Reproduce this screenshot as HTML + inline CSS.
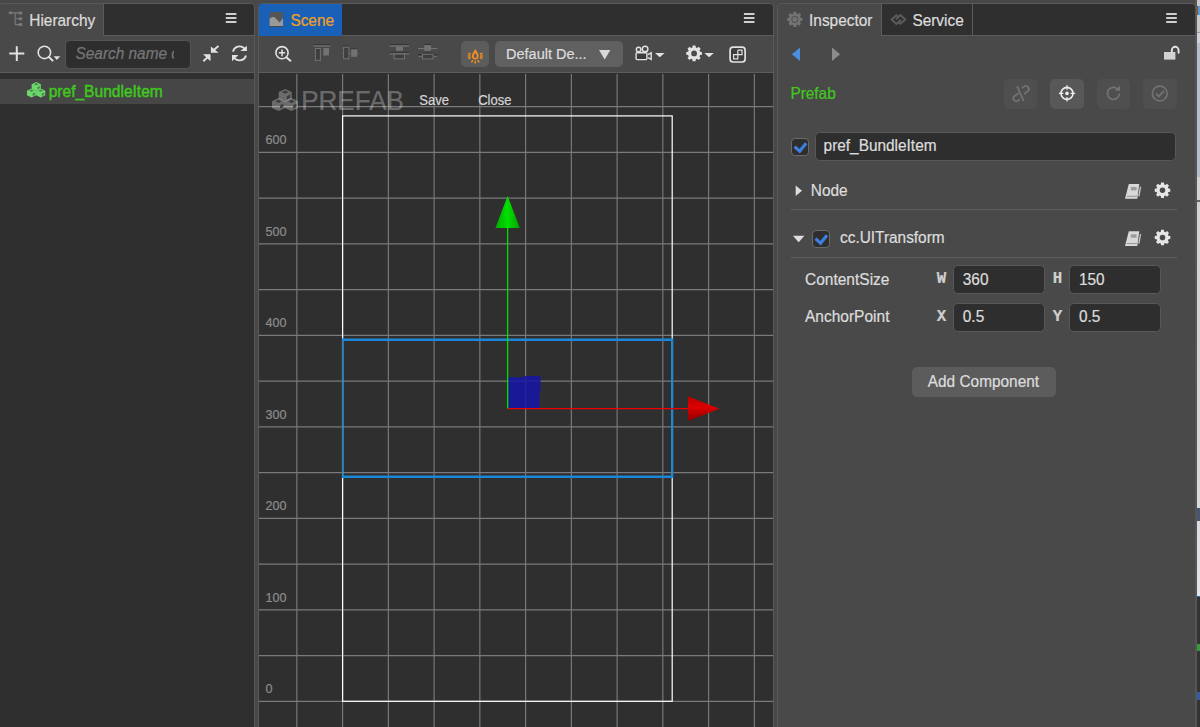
<!DOCTYPE html>
<html><head><meta charset="utf-8"><title>Cocos Creator</title>
<style>
html,body{margin:0;padding:0;}
body{width:1200px;height:727px;overflow:hidden;background:#484848;position:relative;font-family:'Liberation Sans', sans-serif;}
.a{position:absolute;}
.t{position:absolute;white-space:nowrap;line-height:1;-webkit-text-stroke:0.22px currentColor;transform:scaleY(1.06);transform-origin:0 84.65%;}
svg{position:absolute;overflow:visible;}
.inp{position:absolute;box-sizing:border-box;background:#2e2e2e;border:1px solid #585858;border-radius:4.5px;}
.cb{position:absolute;box-sizing:border-box;background:#2e2e2e;border:1.2px solid #6a6a6a;border-radius:4px;}
.btn{position:absolute;border-radius:5px;}
</style></head><body>
<div class="a" style="left:-3px;top:2.5px;width:255.5px;height:730px;background:#2f2f2f;border:1.3px solid #585858;border-radius:4px;"></div>
<div class="a" style="left:0px;top:3.8px;width:103px;height:32px;background:#494949;"></div>
<div class="a" style="left:103px;top:3.8px;width:1px;height:31.5px;background:#5c5c5c;"></div>
<div class="a" style="left:103px;top:35px;width:151px;height:1px;background:#5c5c5c;"></div>
<div class="a" style="left:0px;top:36px;width:254px;height:36.5px;background:#494949;"></div>
<div class="a" style="left:0px;top:72.3px;width:254px;height:1.2px;background:#5c5c5c;"></div>
<div class="a" style="left:0px;top:78.8px;width:254px;height:25.6px;background:#464646;"></div>
<div class="inp" style="left:65.3px;top:39.5px;width:125.6px;height:29px;overflow:hidden;border-color:#555;"></div>
<div class="t" style="left:75.50px;top:45.66px;font-size:15.4px;color:#767676;font-family:'Liberation Sans', sans-serif;font-style:italic;width:98px;overflow:hidden;">Search name or uuid</div>
<div class="t" style="left:29.30px;top:12.61px;font-size:15.4px;color:#dcdcdc;font-family:'Liberation Sans', sans-serif;">Hierarchy</div>
<div class="t" style="left:48.70px;top:83.54px;font-size:15.55px;color:#40c81c;font-family:'Liberation Sans', sans-serif;-webkit-text-stroke:0.45px currentColor;">pref_BundleItem</div>
<div class="a" style="left:257.9px;top:2.5px;width:513.7px;height:730px;background:#2f2f2f;border:1.3px solid #585858;border-radius:4px;"></div>
<div class="a" style="left:259.2px;top:3.8px;width:82.8px;height:31.9px;background:#1960b9;border-top-left-radius:3px;"></div>
<div class="a" style="left:342px;top:35px;width:431px;height:1px;background:#5c5c5c;"></div>
<div class="a" style="left:259px;top:35.6px;width:514px;height:37px;background:#494949;"></div>
<div class="a" style="left:259px;top:72.3px;width:514px;height:1.2px;background:#5c5c5c;"></div>
<div class="t" style="left:290.40px;top:12.66px;font-size:15.4px;color:#f0a020;font-family:'Liberation Sans', sans-serif;">Scene</div>
<div class="btn" style="left:460.6px;top:41.2px;width:28.2px;height:25.6px;background:#5c5c5c;"></div>
<div class="btn" style="left:494.6px;top:41.2px;width:128px;height:25.6px;background:#606060;"></div>
<div class="t" style="left:506.00px;top:47.03px;font-size:14.5px;color:#dcdcdc;font-family:'Liberation Sans', sans-serif;">Default De...</div>
<svg style="left:599.4px;top:50px" width="11.4" height="9.6" viewBox="0 0 11.4 9.6"><path d="M0 0H11.4L5.7 9.6Z" fill="#d8d8d8"/></svg>
<svg class="a" style="left:259px;top:73.5px;" width="514" height="653.5" viewBox="259 73.5 514 653.5">
<defs><linearGradient id="gg" x1="0" x2="1" y1="0" y2="0"><stop offset="0" stop-color="#00a800"/><stop offset="0.5" stop-color="#00e000"/><stop offset="1" stop-color="#00a000"/></linearGradient><linearGradient id="rg" x1="0" x2="0" y1="0" y2="1"><stop offset="0" stop-color="#b80000"/><stop offset="0.45" stop-color="#dc0000"/><stop offset="1" stop-color="#8a0000"/></linearGradient></defs>
<path d="M296.85 73.5V727M342.60 73.5V727M388.35 73.5V727M434.10 73.5V727M479.85 73.5V727M525.60 73.5V727M571.35 73.5V727M617.10 73.5V727M662.85 73.5V727M708.60 73.5V727M754.35 73.5V727M259 746.55H773M259 700.80H773M259 655.05H773M259 609.30H773M259 563.55H773M259 517.80H773M259 472.05H773M259 426.30H773M259 380.55H773M259 334.80H773M259 289.05H773M259 243.30H773M259 197.55H773M259 151.80H773M259 106.05H773" stroke="#ffffff" stroke-opacity="0.36" stroke-width="1.15" fill="none"/>
<rect x="342.6" y="115.4" width="329.6" height="585.4" fill="none" stroke="#ffffff" stroke-width="1.2"/>
<path d="M342.6 339.2H672.2M342.6 476.3H672.2" stroke="#1b87d6" stroke-width="2.4" fill="none"/>
<path d="M342.6 338.0V477.5" stroke="#1b87d6" stroke-width="1.5" fill="none"/>
<path d="M672.2 338.0V477.5" stroke="#1b87d6" stroke-width="2.2" fill="none"/>
<path d="M508.20000000000005 376.8H524.4V375.59999999999997H540.6V391.2H539.6V408.2H508.20000000000005Z" fill="#1616a6" fill-opacity="0.86"/>
<path d="M507.6 408.2V226" stroke="#00e000" stroke-width="1.3"/>
<path d="M507.6 195.4L519.8000000000001 227.4L495.40000000000003 227.4Z" fill="url(#gg)"/>
<path d="M507.6 408.2H689" stroke="#ee0000" stroke-width="1.25"/>
<path d="M719.4 408.2L688 395.8L688 420.59999999999997Z" fill="url(#rg)"/>
</svg>
<div class="t" style="left:301.20px;top:87.55px;font-size:26.05px;color:rgba(255,255,255,0.29);font-family:'Liberation Sans', sans-serif;">PREFAB</div>
<div class="t" style="left:419.30px;top:94.30px;font-size:13px;color:#d4d4d4;font-family:'Liberation Sans', sans-serif;">Save</div>
<div class="t" style="left:478.20px;top:94.30px;font-size:13px;color:#d4d4d4;font-family:'Liberation Sans', sans-serif;">Close</div>
<div class="t" style="left:265.40px;top:683.23px;font-size:12.6px;color:#8c8c8c;font-family:'Liberation Sans', sans-serif;">0</div>
<div class="t" style="left:265.40px;top:591.73px;font-size:12.6px;color:#8c8c8c;font-family:'Liberation Sans', sans-serif;">100</div>
<div class="t" style="left:265.40px;top:500.23px;font-size:12.6px;color:#8c8c8c;font-family:'Liberation Sans', sans-serif;">200</div>
<div class="t" style="left:265.40px;top:408.73px;font-size:12.6px;color:#8c8c8c;font-family:'Liberation Sans', sans-serif;">300</div>
<div class="t" style="left:265.40px;top:317.23px;font-size:12.6px;color:#8c8c8c;font-family:'Liberation Sans', sans-serif;">400</div>
<div class="t" style="left:265.40px;top:225.73px;font-size:12.6px;color:#8c8c8c;font-family:'Liberation Sans', sans-serif;">500</div>
<div class="t" style="left:265.40px;top:134.23px;font-size:12.6px;color:#8c8c8c;font-family:'Liberation Sans', sans-serif;">600</div>
<div class="a" style="left:776.7px;top:2.5px;width:417px;height:730px;background:#494949;border:1.3px solid #585858;border-radius:4px;"></div>
<div class="a" style="left:880.6px;top:4.2px;width:314.4px;height:31.2px;background:#2f2f2f;border-top-right-radius:4px;"></div>
<div class="a" style="left:880.6px;top:4.2px;width:1px;height:31.2px;background:#5c5c5c;"></div>
<div class="a" style="left:972.4px;top:4.2px;width:1px;height:31.2px;background:#5c5c5c;"></div>
<div class="a" style="left:880.6px;top:35px;width:314.4px;height:1px;background:#5c5c5c;"></div>
<div class="t" style="left:809.10px;top:12.66px;font-size:15.4px;color:#dcdcdc;font-family:'Liberation Sans', sans-serif;">Inspector</div>
<div class="t" style="left:912.40px;top:12.66px;font-size:15.4px;color:#dcdcdc;font-family:'Liberation Sans', sans-serif;">Service</div>
<div class="t" style="left:790.40px;top:85.96px;font-size:15.4px;color:#40c81c;font-family:'Liberation Sans', sans-serif;">Prefab</div>
<div class="btn" style="left:1003.8px;top:79px;width:33.4px;height:30.4px;background:#4f4f4f;"></div>
<div class="btn" style="left:1050.4px;top:79px;width:33.4px;height:30.4px;background:#585858;"></div>
<div class="btn" style="left:1097px;top:79px;width:33.4px;height:30.4px;background:#4f4f4f;"></div>
<div class="btn" style="left:1143.2px;top:79px;width:33.4px;height:30.4px;background:#4f4f4f;"></div>
<div class="cb" style="left:791.2px;top:138px;width:17.7px;height:17.7px;"></div>
<div class="inp" style="left:814.6px;top:132.3px;width:361px;height:29.2px;"></div>
<div class="t" style="left:823.60px;top:138.46px;font-size:15.4px;color:#dcdcdc;font-family:'Liberation Sans', sans-serif;">pref_BundleItem</div>
<div class="t" style="left:810.80px;top:182.96px;font-size:15.4px;color:#dcdcdc;font-family:'Liberation Sans', sans-serif;">Node</div>
<div class="a" style="left:791px;top:209.3px;width:385.5px;height:1px;background:#5e5e5e;"></div>
<div class="cb" style="left:812.2px;top:230px;width:17.4px;height:17.6px;"></div>
<div class="t" style="left:840.00px;top:229.96px;font-size:15.4px;color:#dcdcdc;font-family:'Liberation Sans', sans-serif;">cc.UITransform</div>
<div class="a" style="left:791px;top:257.1px;width:385.5px;height:1px;background:#5e5e5e;"></div>
<div class="t" style="left:805.00px;top:271.63px;font-size:15.5px;color:#dcdcdc;font-family:'Liberation Sans', sans-serif;">ContentSize</div>
<div class="t" style="left:805.00px;top:309.18px;font-size:15.5px;color:#dcdcdc;font-family:'Liberation Sans', sans-serif;">AnchorPoint</div>
<div class="inp" style="left:953px;top:265.2px;width:92.2px;height:29px;"></div>
<div class="inp" style="left:1069.3px;top:265.2px;width:92px;height:29px;"></div>
<div class="t" style="left:936.70px;top:272.33px;font-size:15.8px;color:#cfcfcf;font-family:'Liberation Mono', monospace;font-weight:bold;">W</div>
<div class="t" style="left:1052.70px;top:272.33px;font-size:15.8px;color:#cfcfcf;font-family:'Liberation Mono', monospace;font-weight:bold;">H</div>
<div class="t" style="left:962.80px;top:271.76px;font-size:15.4px;color:#dcdcdc;font-family:'Liberation Sans', sans-serif;">360</div>
<div class="t" style="left:1079.00px;top:271.76px;font-size:15.4px;color:#dcdcdc;font-family:'Liberation Sans', sans-serif;">150</div>
<div class="inp" style="left:953px;top:302.6px;width:92.2px;height:29px;"></div>
<div class="inp" style="left:1069.3px;top:302.6px;width:92px;height:29px;"></div>
<div class="t" style="left:936.70px;top:309.73px;font-size:15.8px;color:#cfcfcf;font-family:'Liberation Mono', monospace;font-weight:bold;">X</div>
<div class="t" style="left:1052.70px;top:309.73px;font-size:15.8px;color:#cfcfcf;font-family:'Liberation Mono', monospace;font-weight:bold;">Y</div>
<div class="t" style="left:962.80px;top:309.16px;font-size:15.4px;color:#dcdcdc;font-family:'Liberation Sans', sans-serif;">0.5</div>
<div class="t" style="left:1079.00px;top:309.16px;font-size:15.4px;color:#dcdcdc;font-family:'Liberation Sans', sans-serif;">0.5</div>
<div class="btn" style="left:912.3px;top:366.7px;width:143.4px;height:30.6px;background:#5c5c5c;"></div>
<div class="t" style="left:927.80px;top:373.96px;font-size:15.4px;color:#dcdcdc;font-family:'Liberation Sans', sans-serif;">Add Component</div>
<div class="a" style="left:1195px;top:0px;width:2px;height:727px;background:#555;"></div>
<div class="a" style="left:1196.6px;top:0;width:3.4px;height:727px;background:linear-gradient(to bottom,#c8c8c8 0,#c8c8c8 32px,#9a9a9a 32px,#9a9a9a 33px,#cfd2d8 33px,#cfd2d8 43px,#b6becd 43px,#b6becd 177px,#d4d4d4 177px,#d4d4d4 200.5px,#666 200.5px,#666 202px,#d2d2d2 202px,#d6d8dc 480px,#e2e4ea 596px,#2a6fd0 596px,#2a6fd0 597.5px,#333 597.5px,#333 727px);"></div>
<div class="a" style="left:1196.2px;top:6px;width:2.6px;height:8.5px;background:#7a5a3a;"></div>
<div class="a" style="left:1198px;top:6px;width:2px;height:8.5px;background:#5a9ad8;"></div>
<div class="a" style="left:1196.6px;top:508px;width:3.4px;height:13px;background:#4a5670;"></div>
<div class="a" style="left:1196.6px;top:644px;width:3.4px;height:7px;background:#3a9a3a;"></div>
<div class="a" style="left:1196.6px;top:692px;width:3.4px;height:8px;background:#3a5aa8;"></div>
<svg class="a" style="left:0;top:0;" width="1200" height="727" viewBox="0 0 1200 727"><g fill="#7a7a7a" stroke="none"><rect x="8.8" y="11.6" width="3.2" height="2.6"/><rect x="18.8" y="11.6" width="3.4" height="2.8"/><rect x="18.8" y="17.4" width="3.4" height="2.8"/><rect x="18.8" y="23.2" width="3.4" height="2.8"/></g><path d="M11 12.9H19M15.2 12.9V24.6M15.2 18.8H19M15.2 24.6H19" stroke="#7a7a7a" stroke-width="1.1" fill="none"/><path d="M225.8 14H236.4M225.8 18H236.4M225.8 22H236.4" stroke="#cecece" stroke-width="2"/><path d="M743.9 14H754.5M743.9 18H754.5M743.9 22H754.5" stroke="#cecece" stroke-width="2"/><path d="M1166.2 14H1176.8M1166.2 18H1176.8M1166.2 22H1176.8" stroke="#cecece" stroke-width="2"/><path d="M9.3 53.6H24.3M16.8 46.3V60.9" stroke="#e2e2e2" stroke-width="2"/><circle cx="44.4" cy="52.4" r="6.2" stroke="#e2e2e2" stroke-width="1.6" fill="none"/><path d="M48.9 57L52.6 60.6" stroke="#e2e2e2" stroke-width="2" stroke-linecap="round"/><path d="M53.6 56.2H60.2L56.9 60Z" fill="#e2e2e2"/><path d="M210.9 46.4V52.7H218.6Z" fill="#e2e2e2"/><path d="M213.4 50.2L218.5 45.9" stroke="#e2e2e2" stroke-width="1.9"/><path d="M203 54.2H210.5V61.2Z" fill="#e2e2e2"/><path d="M208 56.9L203.3 61.2" stroke="#e2e2e2" stroke-width="1.9"/><g stroke="#e2e2e2" stroke-width="1.8" fill="none"><path d="M233 51.6A6.8 6.8 0 0 1 244.4 48.4"/><path d="M246 55.4A6.8 6.8 0 0 1 234.6 58.4"/></g><path d="M240.4 51.1H246.9V45.7Z" fill="#e2e2e2"/><path d="M232 55.1H238.4L232 61.3Z" fill="#e2e2e2"/><g transform="translate(26.9 81.9) scale(0.7076923076923076)"><path d="M13.2 0L19.7 3.185V9.815L13.2 13.0L6.699999999999999 9.815V3.185Z" fill="#6ed66e" fill-opacity="1"/><path d="M13.2 1.5925L16.45 3.185L13.2 4.7775L9.95 3.185ZM14.82 7.23L18.07 5.64L18.07 8.95L14.82 10.55Z" fill="#3f8f3f" fill-opacity="1"/><path d="M6.5 9.2L13.0 12.385V19.015L6.5 22.2L0.0 19.015V12.385Z" fill="#6ed66e" fill-opacity="1"/><path d="M6.5 10.7925L9.75 12.385L6.5 13.9775L3.25 12.385ZM8.12 16.43L11.38 14.84L11.38 18.15L8.12 19.75Z" fill="#3f8f3f" fill-opacity="1"/><path d="M19.5 9.2L26.0 12.385V19.015L19.5 22.2L13.0 19.015V12.385Z" fill="#6ed66e" fill-opacity="1"/><path d="M19.5 10.7925L22.75 12.385L19.5 13.9775L16.25 12.385ZM21.12 16.43L24.38 14.84L24.38 18.15L21.12 19.75Z" fill="#3f8f3f" fill-opacity="1"/></g><rect x="269.6" y="12" width="13.4" height="14.8" fill="#555"/><path d="M269.6 18.6L272.4 17L274.6 17.2L279.6 22.6L283 18.2V26.2H269.6Z" fill="#9a9a9a"/><rect x="269.6" y="26" width="13.4" height="0.9" fill="#454545"/><circle cx="282" cy="52.7" r="6.1" stroke="#e2e2e2" stroke-width="1.6" fill="none"/><path d="M278.8 52.8H285.2M282 49.4V56.2" stroke="#e2e2e2" stroke-width="1.5"/><path d="M286.6 57.4L290.4 60.8" stroke="#e2e2e2" stroke-width="2" stroke-linecap="round"/><g><rect x="313.4" y="44" width="17" height="1.3" fill="#363636"/><rect x="313.4" y="45.3" width="17" height="1.3" fill="#727272"/><rect x="315.4" y="48.5" width="5" height="11.8" fill="#3e3e3e" stroke="#727272" stroke-width="1"/><rect x="323.3" y="48" width="5.7" height="7.5" fill="#727272"/><rect x="343" y="45.6" width="6.4" height="1.1" fill="#363636"/><rect x="351.2" y="48.2" width="6" height="1.1" fill="#363636"/><rect x="342" y="52.8" width="16.6" height="1" fill="#727272" opacity="0.7"/><rect x="343.6" y="47.2" width="5.3" height="11.6" fill="#3e3e3e" stroke="#727272" stroke-width="1"/><rect x="351.2" y="49.3" width="6" height="7.5" fill="#727272"/><rect x="389.5" y="44" width="19.5" height="1.3" fill="#363636"/><rect x="389.5" y="45.3" width="19.5" height="1.4" fill="#727272"/><rect x="396" y="46.7" width="7" height="4.1" fill="#727272"/><rect x="389.5" y="51.9" width="19.5" height="1.3" fill="#363636"/><rect x="389.5" y="53.2" width="19.5" height="1.3" fill="#727272"/><rect x="394" y="54" width="10.5" height="4.8" fill="#3e3e3e" stroke="#727272" stroke-width="1"/><rect x="424.2" y="43.9" width="6.8" height="1.2" fill="#363636"/><rect x="418" y="48" width="19.3" height="1.1" fill="#727272"/><rect x="424.2" y="45.1" width="6.8" height="5.7" fill="#727272"/><rect x="418" y="54" width="4" height="1.1" fill="#363636"/><rect x="433.5" y="54" width="4" height="1.1" fill="#363636"/><rect x="422.4" y="52.6" width="11" height="1.1" fill="#363636"/><rect x="418" y="56.1" width="19.3" height="1.1" fill="#727272" opacity="0.8"/><rect x="422.5" y="54.3" width="10.6" height="4.6" fill="#3e3e3e" stroke="#727272" stroke-width="1"/></g><path d="M470.70 54.22L468.16 53.30M470.40 55.90L467.70 55.90M470.70 57.58L468.16 58.50M479.90 54.22L482.44 53.30M480.20 55.90L482.90 55.90M479.90 57.58L482.44 58.50M477.75 60.14L479.10 62.48M475.30 60.80L475.30 63.50M472.85 60.14L471.50 62.48" stroke="#f08e1e" stroke-width="1.5"/><path d="M475.3 48.699999999999996C476.5 51.5 478.7 53.3 478.7 56.1A3.4 3.4 0 0 1 471.90000000000003 56.1C471.90000000000003 53.3 474.1 51.5 475.3 48.699999999999996ZM475.3 53.1C476.1 54.3 476.8 55.1 476.8 56.3A1.5 1.7 0 0 1 473.8 56.3C473.8 55.1 474.5 54.3 475.3 53.1Z" fill="#f08e1e" fill-rule="evenodd"/><g stroke="#e2e2e2" stroke-width="1.4" fill="none"><rect x="636.1" y="52.8" width="10.8" height="6.8" rx="1" fill="#3c3c3c"/><circle cx="638.6" cy="49.5" r="2.3"/><circle cx="645.1" cy="49" r="2.8"/><path d="M648 54.6L651.2 52.8V59.4L648 57.6"/></g><path d="M655 53.1H664.6L659.8 57.3Z" fill="#e2e2e2"/><path d="M692.39 47.44L692.65 45.53L695.55 45.53L695.81 47.44L697.10 47.98L698.64 46.81L700.69 48.86L699.52 50.40L700.06 51.69L701.97 51.95L701.97 54.85L700.06 55.11L699.52 56.40L700.69 57.94L698.64 59.99L697.10 58.82L695.81 59.36L695.55 61.27L692.65 61.27L692.39 59.36L691.10 58.82L689.56 59.99L687.51 57.94L688.68 56.40L688.14 55.11L686.23 54.85L686.23 51.95L688.14 51.69L688.68 50.40L687.51 48.86L689.56 46.81L691.10 47.98ZM691.20 53.40a2.9 2.9 0 1 0 5.8 0a2.9 2.9 0 1 0 -5.8 0Z" fill="#e2e2e2" fill-rule="evenodd"/><path d="M704.4 52.9H713.8L709.1 57.2Z" fill="#e2e2e2"/><rect x="730.1" y="47.2" width="15" height="14.8" rx="3" stroke="#e2e2e2" stroke-width="1.7" fill="#3e3e3e"/><path d="M737.8 50.2H742V54.6H737.8V50.2M737.8 54.6V58.8H733.6V54.6H737.8" stroke="#e2e2e2" stroke-width="1.2" fill="none"/><g transform="translate(272 88.9) scale(1.0)"><path d="M13.2 0L19.7 3.185V9.815L13.2 13.0L6.699999999999999 9.815V3.185Z" fill="#ffffff" fill-opacity="0.29"/><path d="M13.2 1.5925L16.45 3.185L13.2 4.7775L9.95 3.185ZM14.82 7.23L18.07 5.64L18.07 8.95L14.82 10.55Z" fill="#2f2f2f" fill-opacity="0.8"/><path d="M6.5 9.2L13.0 12.385V19.015L6.5 22.2L0.0 19.015V12.385Z" fill="#ffffff" fill-opacity="0.29"/><path d="M6.5 10.7925L9.75 12.385L6.5 13.9775L3.25 12.385ZM8.12 16.43L11.38 14.84L11.38 18.15L8.12 19.75Z" fill="#2f2f2f" fill-opacity="0.8"/><path d="M19.5 9.2L26.0 12.385V19.015L19.5 22.2L13.0 19.015V12.385Z" fill="#ffffff" fill-opacity="0.29"/><path d="M19.5 10.7925L22.75 12.385L19.5 13.9775L16.25 12.385ZM21.12 16.43L24.38 14.84L24.38 18.15L21.12 19.75Z" fill="#2f2f2f" fill-opacity="0.8"/></g><path d="M793.22 13.72L793.45 11.82L796.15 11.82L796.38 13.72L797.70 14.26L799.20 13.08L801.12 15.00L799.94 16.50L800.48 17.82L802.38 18.05L802.38 20.75L800.48 20.98L799.94 22.30L801.12 23.80L799.20 25.72L797.70 24.54L796.38 25.08L796.15 26.98L793.45 26.98L793.22 25.08L791.90 24.54L790.40 25.72L788.48 23.80L789.66 22.30L789.12 20.98L787.22 20.75L787.22 18.05L789.12 17.82L789.66 16.50L788.48 15.00L790.40 13.08L791.90 14.26Z" fill="#747474"/><circle cx="794.8" cy="19.4" r="3.0" stroke="#565656" stroke-width="1.1" fill="none"/><g stroke="#5b5b5b" stroke-width="2" fill="none" stroke-linejoin="round"><path d="M898.6 17.2L896.4 15.2L891.6 19.6L896.4 24L901 19.8"/><path d="M898.2 21.8L900.4 23.8L905.4 19.4L900.4 15L896 19.2"/></g><path d="M800 47.6V61L791.9 54.3Z" fill="#4a90e2"/><path d="M832 47.6V61L840.1 54.3Z" fill="#8c8c8c"/><rect x="1164" y="52" width="11.4" height="7.6" fill="#d2d2d2"/><path d="M1171.8 52.4V50.2A3.4 3.4 0 0 1 1178.6 50.2V53.6" stroke="#e4e4e4" stroke-width="1.9" fill="none"/><g stroke="#727272" stroke-width="1.8" fill="none" stroke-linecap="round"><path d="M1017.4 86.8L1023.4 100.4"/><path d="M1018.4 93.4L1014.2 96.2A3 3 0 0 0 1017.6 101L1019.2 99.8"/><path d="M1022.4 87.8L1024 86.6A3 3 0 0 1 1027.6 91.4L1024.6 93.8"/></g><circle cx="1067" cy="93.4" r="6" stroke="#ececec" stroke-width="1.6" fill="none"/><circle cx="1067" cy="93.4" r="1.8" fill="#ececec"/><path d="M1058.8 93.4H1063.4M1070.6 93.4H1075.2M1067 85.2V89.8M1067 97V101.6" stroke="#ececec" stroke-width="1.3"/><path d="M1119.4 93.4A6 6 0 1 1 1117 88.6" stroke="#727272" stroke-width="1.8" fill="none"/><path d="M1120 85.4V90.8H1114.6Z" fill="#727272"/><circle cx="1159.8" cy="93.5" r="7.4" stroke="#727272" stroke-width="1.7" fill="none"/><path d="M1156 93.6L1158.8 96.4L1164 90.8" stroke="#727272" stroke-width="1.9" fill="none"/><path d="M794.6 146.6L799.7 151.2L806.1 143.2" stroke="#3f7fe2" stroke-width="3.2" fill="none"/><path d="M815.5 238.6L820.6 243.2L827.0 235.2" stroke="#3f7fe2" stroke-width="3.2" fill="none"/><path d="M795.7 185.6V196L802 190.8Z" fill="#dedede"/><path d="M793 235.8H804.4L798.7 242.2Z" fill="#dedede"/><path d="M1128.8 184H1139.3L1137.3 198.8H1125Z" fill="#d8d8d8"/><path d="M1139.9 186.6L1141.2 186.8L1139.6 196.4L1138.2 196.2Z" fill="#c4c4c4"/><rect x="1130.8" y="187" width="5.8" height="3.4" fill="#9c9c9c"/><path d="M1126.8 196.3H1136.8" stroke="#8a8a8a" stroke-width="0.9"/><path d="M1160.81 184.39L1161.07 182.48L1163.93 182.48L1164.19 184.39L1165.45 184.91L1166.98 183.74L1169.01 185.77L1167.84 187.30L1168.36 188.56L1170.27 188.82L1170.27 191.68L1168.36 191.94L1167.84 193.20L1169.01 194.73L1166.98 196.76L1165.45 195.59L1164.19 196.11L1163.93 198.02L1161.07 198.02L1160.81 196.11L1159.55 195.59L1158.02 196.76L1155.99 194.73L1157.16 193.20L1156.64 191.94L1154.73 191.68L1154.73 188.82L1156.64 188.56L1157.16 187.30L1155.99 185.77L1158.02 183.74L1159.55 184.91ZM1159.70 190.25a2.8 2.8 0 1 0 5.6 0a2.8 2.8 0 1 0 -5.6 0Z" fill="#e6e6e6" fill-rule="evenodd"/><path d="M1128.8 231.3H1139.3L1137.3 246.10000000000002H1125Z" fill="#d8d8d8"/><path d="M1139.9 233.9L1141.2 234.10000000000002L1139.6 243.70000000000002L1138.2 243.5Z" fill="#c4c4c4"/><rect x="1130.8" y="234.3" width="5.8" height="3.4" fill="#9c9c9c"/><path d="M1126.8 243.60000000000002H1136.8" stroke="#8a8a8a" stroke-width="0.9"/><path d="M1160.81 231.69L1161.07 229.78L1163.93 229.78L1164.19 231.69L1165.45 232.21L1166.98 231.04L1169.01 233.07L1167.84 234.60L1168.36 235.86L1170.27 236.12L1170.27 238.98L1168.36 239.24L1167.84 240.50L1169.01 242.03L1166.98 244.06L1165.45 242.89L1164.19 243.41L1163.93 245.32L1161.07 245.32L1160.81 243.41L1159.55 242.89L1158.02 244.06L1155.99 242.03L1157.16 240.50L1156.64 239.24L1154.73 238.98L1154.73 236.12L1156.64 235.86L1157.16 234.60L1155.99 233.07L1158.02 231.04L1159.55 232.21ZM1159.70 237.55a2.8 2.8 0 1 0 5.6 0a2.8 2.8 0 1 0 -5.6 0Z" fill="#e6e6e6" fill-rule="evenodd"/></svg>
</body></html>
